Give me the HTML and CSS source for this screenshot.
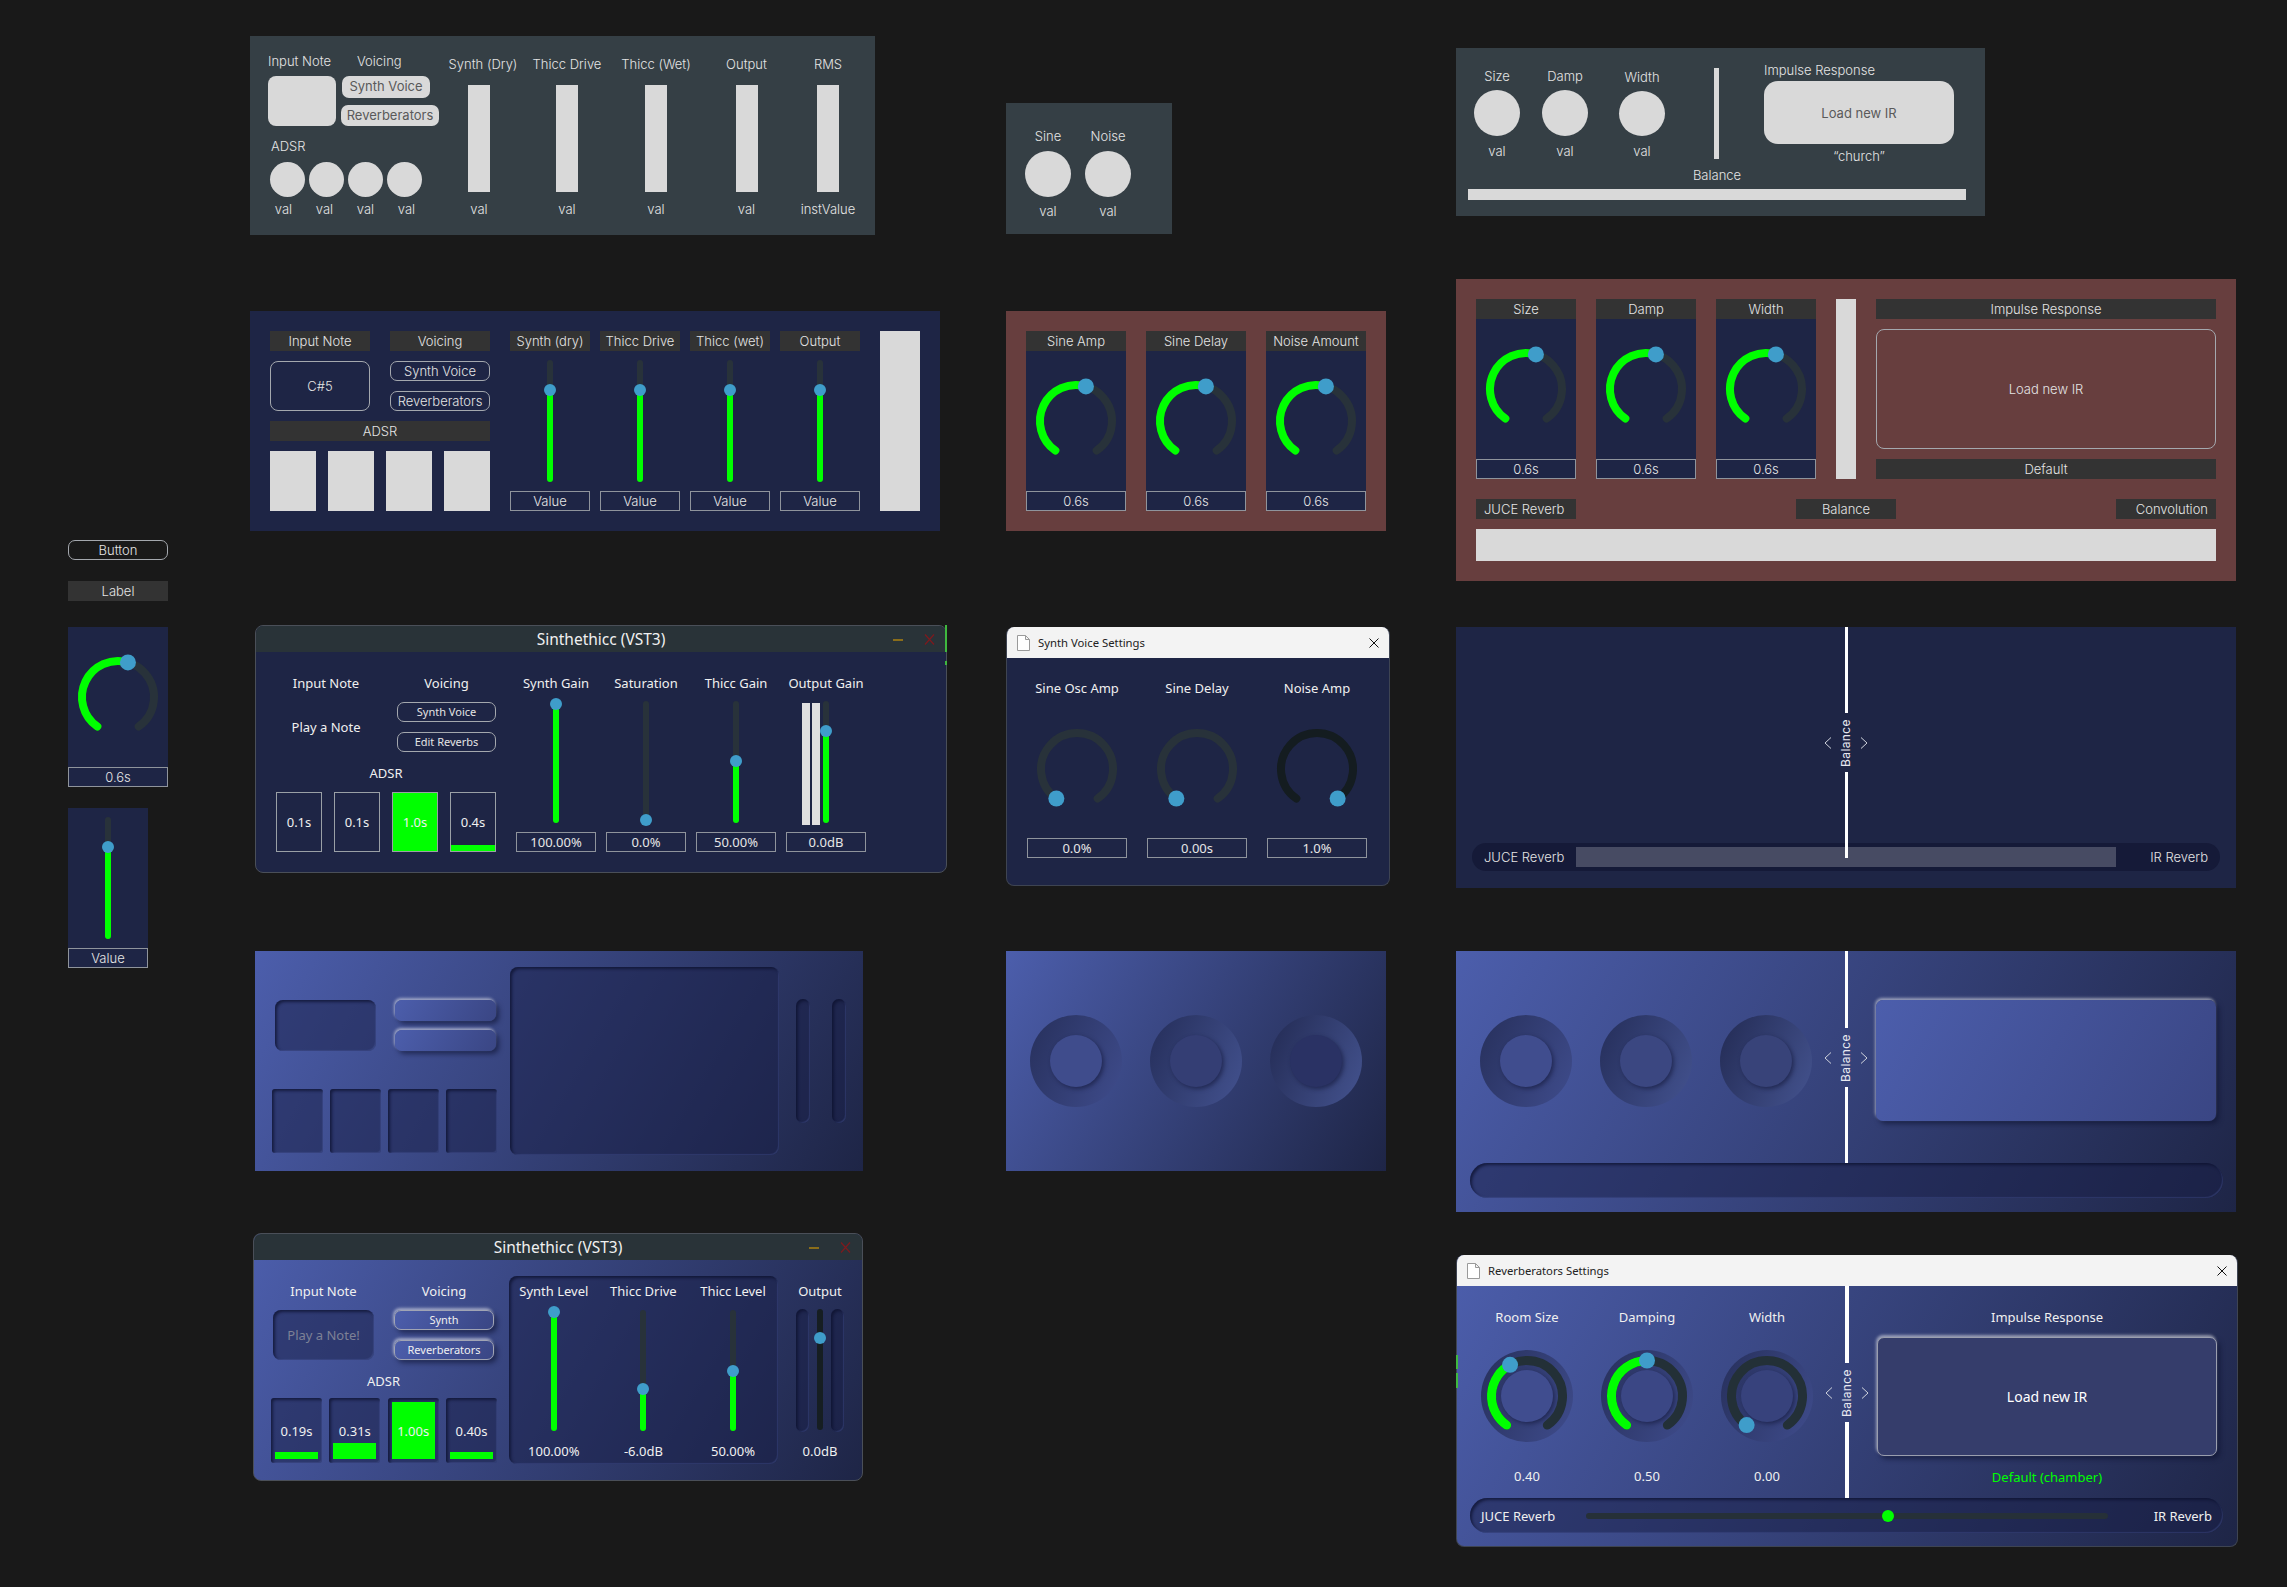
FILE: index.html
```html
<!DOCTYPE html>
<html>
<head>
  <title>Sinthethicc UI Board</title>
  <meta charset="UTF-8">
  <meta name="viewport" content="width=device-width, initial-scale=1.0">
  <link rel="stylesheet" href="styles.css">
</head>
<body>
  <!-- shared knob drawings -->
  <svg class="defs" aria-hidden="true">
    <symbol id="knob-mid" viewBox="-8 -8 96 96">
      <path class="arc-track" d="M19.35 69.49A36 36 0 1 1 60.65 69.49"/>
      <path class="arc-value" d="M19.35 69.49A36 36 0 0 1 49.92 5.39"/>
      <circle class="arc-thumb" cx="49.92" cy="5.39" r="8"/>
    </symbol>
    <symbol id="knob-min" viewBox="-8 -8 96 96">
      <path class="arc-track" d="M19.35 69.49A36 36 0 1 1 60.65 69.49"/>
      <circle class="arc-thumb" cx="19.35" cy="69.49" r="8"/>
    </symbol>
    <symbol id="knob-max" viewBox="-8 -8 96 96">
      <path class="arc-track dark" d="M19.35 69.49A36 36 0 1 1 60.65 69.49"/>
      <circle class="arc-thumb" cx="60.65" cy="69.49" r="8"/>
    </symbol>
    <symbol id="rev-room" viewBox="0 0 92 92">
      <path class="arc-track thick" d="M25.64 75.08A35.5 35.5 0 1 1 66.36 75.08"/>
      <path class="arc-value thick" d="M25.64 75.08A35.5 35.5 0 0 1 29.06 14.8"/>
      <circle class="arc-thumb" cx="29.06" cy="14.8" r="8"/>
    </symbol>
    <symbol id="rev-damp" viewBox="0 0 92 92">
      <path class="arc-track thick" d="M25.64 75.08A35.5 35.5 0 1 1 66.36 75.08"/>
      <path class="arc-value thick" d="M25.64 75.08A35.5 35.5 0 0 1 46 10.5"/>
      <circle class="arc-thumb" cx="46" cy="10.5" r="8"/>
    </symbol>
    <symbol id="rev-width" viewBox="0 0 92 92">
      <path class="arc-track thick" d="M25.64 75.08A35.5 35.5 0 1 1 66.36 75.08"/>
      <circle class="arc-thumb" cx="25.64" cy="75.08" r="8"/>
    </symbol>
    <symbol id="chev-left" viewBox="0 0 8 12"><path class="chev" d="M7 .5 1 6l6 5.5"/></symbol>
    <symbol id="chev-right" viewBox="0 0 8 12"><path class="chev" d="M1 .5 7 6l-6 5.5"/></symbol>
    <symbol id="doc" viewBox="0 0 13 16"><path class="doc" d="M.5.5h8l4 4v11H.5zM8.5.5v4h4"/></symbol>
  </svg>

  <main class="board">

    <!-- left column: single components -->
    <div class="panel at-button btn">Button</div>
    <div class="panel at-label tag">Label</div>
    <div class="panel at-knobcard knob-card">
      <div class="knob-body"><svg class="knob"><use href="#knob-mid"/></svg></div>
      <div class="val">0.6s</div>
    </div>
    <div class="panel at-slidercard">
      <div class="slider-body"><div class="fader" style="--v:75.4%"><i></i><b></b></div></div>
      <div class="val">Value</div>
    </div>

    <!-- wireframe, main -->
    <section class="panel at-wire-main slate wire-main">
      <div class="wire-left">
        <div class="wire-heads"><span class="wire-note-head">Input Note</span><span>Voicing</span></div>
        <div class="wire-row">
          <div class="wire-note"></div>
          <div class="wire-btns">
            <div class="wire-btn wide-a">Synth Voice</div>
            <div class="wire-btn wide-b">Reverberators</div>
          </div>
        </div>
        <div class="wire-adsr">ADSR</div>
        <div class="wire-dots"><i></i><i></i><i></i><i></i></div>
        <div class="wire-vals"><span>val</span><span>val</span><span>val</span><span>val</span></div>
      </div>
      <div class="wire-col c1"><span class="nudge">Synth (Dry)</span><div class="wire-bar"></div><span>val</span></div>
      <div class="wire-col c2"><span>Thicc Drive</span><div class="wire-bar"></div><span>val</span></div>
      <div class="wire-col c3"><span>Thicc (Wet)</span><div class="wire-bar"></div><span>val</span></div>
      <div class="wire-col c4"><span>Output</span><div class="wire-bar"></div><span>val</span></div>
      <div class="wire-col c5"><span>RMS</span><div class="wire-bar"></div><span>instValue</span></div>
    </section>

    <section class="panel at-wire-sine slate wire-sine">
      <div class="sine-col"><span>Sine</span><i></i><span>val</span></div>
      <div class="sine-col"><span>Noise</span><i></i><span>val</span></div>
    </section>

    <section class="panel at-wire-rev slate wire-rev">
      <div class="wr-top">
        <div class="wr-knobs">
          <div class="sine-col"><span>Size</span><i></i><span>val</span></div>
          <div class="sine-col"><span>Damp</span><i></i><span>val</span></div>
          <div class="sine-col low"><span>Width</span><i></i><span>val</span></div>
        </div>
        <div class="wr-divider"></div>
        <div class="wr-impulse">
          <span>Impulse Response</span>
          <div class="wr-load">Load new IR</div>
          <span class="wr-name">“church”</span>
        </div>
      </div>
      <div class="wr-balance">Balance</div>
      <div class="wr-bar"></div>
    </section>

    <!-- labelled blocks -->
    <section class="panel at-block-main navy block-main">
      <div class="block-left">
        <div class="tag">Input Note</div>
        <div class="tag">Voicing</div>
        <div class="note-box">C#5</div>
        <div class="btn-stack">
          <div class="btn">Synth Voice</div>
          <div class="btn">Reverberators</div>
        </div>
        <div class="tag span2">ADSR</div>
        <div class="block-env span2"><i></i><i></i><i></i><i></i></div>
      </div>
      <div class="block-faders">
        <div class="fader-col"><div class="tag">Synth (dry)</div><div class="fader" style="--v:75.4%"><i></i><b></b></div><div class="val">Value</div></div>
        <div class="fader-col"><div class="tag">Thicc Drive</div><div class="fader" style="--v:75.4%"><i></i><b></b></div><div class="val">Value</div></div>
        <div class="fader-col"><div class="tag">Thicc (wet)</div><div class="fader" style="--v:75.4%"><i></i><b></b></div><div class="val">Value</div></div>
        <div class="fader-col"><div class="tag">Output</div><div class="fader" style="--v:75.4%"><i></i><b></b></div><div class="val">Value</div></div>
      </div>
      <div class="block-meter"></div>
    </section>

    <section class="panel at-block-sine red block-sine">
      <div class="knob-card"><div class="tag">Sine Amp</div><div class="knob-body"><svg class="knob"><use href="#knob-mid"/></svg></div><div class="val">0.6s</div></div>
      <div class="knob-card"><div class="tag">Sine Delay</div><div class="knob-body"><svg class="knob"><use href="#knob-mid"/></svg></div><div class="val">0.6s</div></div>
      <div class="knob-card"><div class="tag">Noise Amount</div><div class="knob-body"><svg class="knob"><use href="#knob-mid"/></svg></div><div class="val">0.6s</div></div>
    </section>

    <section class="panel at-block-rev red block-rev">
      <div class="brev-top">
        <div class="knob-card"><div class="tag">Size</div><div class="knob-body"><svg class="knob"><use href="#knob-mid"/></svg></div><div class="val">0.6s</div></div>
        <div class="knob-card"><div class="tag">Damp</div><div class="knob-body"><svg class="knob"><use href="#knob-mid"/></svg></div><div class="val">0.6s</div></div>
        <div class="knob-card"><div class="tag">Width</div><div class="knob-body"><svg class="knob"><use href="#knob-mid"/></svg></div><div class="val">0.6s</div></div>
        <div class="brev-divider"></div>
        <div class="brev-impulse">
          <div class="tag">Impulse Response</div>
          <div class="brev-load">Load new IR</div>
          <div class="tag">Default</div>
        </div>
      </div>
      <div class="brev-labels">
        <div class="tag start">JUCE Reverb</div>
        <div class="tag">Balance</div>
        <div class="tag end">Convolution</div>
      </div>
      <div class="brev-bar"></div>
    </section>

    <!-- plugin window, flat -->
    <section class="panel at-win-flat win navy">
      <header class="win-title">
        <span>Sinthethicc (VST3)</span>
        <i class="win-min"></i>
        <svg class="win-x" viewBox="0 0 11 11"><path d="M1 .5l9 10M10 .5l-9 10"/></svg>
      </header>
      <div class="win-body flat-body">
        <div class="win-left">
          <div class="win-head">Input Note</div>
          <div class="win-head">Voicing</div>
          <div class="win-note">Play a Note</div>
          <div class="btn-stack">
            <div class="btn small">Synth Voice</div>
            <div class="btn small">Edit Reverbs</div>
          </div>
          <div class="win-head span2">ADSR</div>
          <div class="env-row span2">
            <div class="env"><span>0.1s</span></div>
            <div class="env"><span>0.1s</span></div>
            <div class="env"><i style="height:100%"></i><span>1.0s</span></div>
            <div class="env"><i style="height:11%"></i><span>0.4s</span></div>
          </div>
        </div>
        <div class="win-faders">
          <div class="fader-col win-col"><div class="win-head">Synth Gain</div><div class="fader" style="--v:97.5%"><i></i><b></b></div><div class="val win-val">100.00%</div></div>
          <div class="fader-col win-col"><div class="win-head">Saturation</div><div class="fader" style="--v:2.5%"><i></i><b></b></div><div class="val win-val">0.0%</div></div>
          <div class="fader-col win-col"><div class="win-head">Thicc Gain</div><div class="fader" style="--v:50.8%"><i></i><b></b></div><div class="val win-val">50.00%</div></div>
          <div class="fader-col win-col"><div class="win-head">Output Gain</div><div class="fader" style="--v:75.4%"><div class="meter"><u></u><u></u></div><i></i><b></b></div><div class="val win-val">0.0dB</div></div>
        </div>
      </div>
    </section>
    <i class="panel edge-mark em-flat-a"></i>
    <i class="panel edge-mark em-flat-b"></i>

    <!-- synth voice settings window -->
    <section class="panel at-win-voice syswin navy">
      <header class="sys-title">
        <svg class="sys-doc"><use href="#doc"/></svg>
        <span>Synth Voice Settings</span>
        <svg class="sys-x" viewBox="0 0 10 10"><path d="M.5.5l9 9M9.5.5l-9 9"/></svg>
      </header>
      <div class="voice-body">
        <div class="voice-col"><div class="win-head">Sine Osc Amp</div><svg class="knob"><use href="#knob-min"/></svg><div class="val">0.0%</div></div>
        <div class="voice-col"><div class="win-head">Sine Delay</div><svg class="knob"><use href="#knob-min"/></svg><div class="val">0.00s</div></div>
        <div class="voice-col"><div class="win-head">Noise Amp</div><svg class="knob"><use href="#knob-max"/></svg><div class="val">1.0%</div></div>
      </div>
    </section>

    <!-- balance overlay on navy -->
    <section class="panel at-split navy split-panel">
      <div class="split"><i class="line h86"></i><div class="split-mid m59"><svg class="chev-icon"><use href="#chev-left"/></svg><span class="v-text">Balance</span><svg class="chev-icon"><use href="#chev-right"/></svg></div><i class="line h86"></i></div>
      <div class="split-pill">
        <span class="pill-start">JUCE Reverb</span>
        <div class="split-track"></div>
        <span class="pill-end">IR Reverb</span>
      </div>
    </section>

    <!-- soft gradient panels -->
    <section class="panel at-soft-main grad soft-main">
      <div class="soft-left">
        <div class="soft-row">
          <div class="inset soft-note"></div>
          <div class="soft-btns"><div class="raised"></div><div class="raised"></div></div>
        </div>
        <div class="soft-env"><div class="inset"></div><div class="inset"></div><div class="inset"></div><div class="inset"></div></div>
      </div>
      <div class="inset soft-big"></div>
      <div class="inset soft-slot"></div>
      <div class="inset soft-slot"></div>
    </section>

    <section class="panel at-soft-sine grad soft-sine">
      <div class="well"><div class="hole h1"></div></div>
      <div class="well w2"><div class="hole h2"></div></div>
      <div class="well w3"><div class="hole h3"></div></div>
    </section>

    <section class="panel at-soft-rev grad soft-rev">
      <div class="split"><i class="line h77"></i><div class="split-mid m59"><svg class="chev-icon"><use href="#chev-left"/></svg><span class="v-text">Balance</span><svg class="chev-icon"><use href="#chev-right"/></svg></div><i class="line h76"></i></div>
      <div class="srev-row">
        <div class="well"><div class="hole h1"></div></div>
        <div class="well w2"><div class="hole h2"></div></div>
        <div class="well w3"><div class="hole h3"></div></div>
        <div class="raised srev-box"></div>
      </div>
      <div class="inset srev-pill"></div>
    </section>

    <!-- plugin window, soft -->
    <section class="panel at-win-soft win grad">
      <header class="win-title">
        <span>Sinthethicc (VST3)</span>
        <i class="win-min"></i>
        <svg class="win-x" viewBox="0 0 11 11"><path d="M1 .5l9 10M10 .5l-9 10"/></svg>
      </header>
      <div class="win-body soft-body">
        <div class="win-left sw-left">
          <div class="win-head">Input Note</div>
          <div class="win-head">Voicing</div>
          <div class="inset sw-note">Play a Note!</div>
          <div class="btn-stack">
            <div class="raised labeled">Synth</div>
            <div class="raised labeled">Reverberators</div>
          </div>
          <div class="win-head span2">ADSR</div>
          <div class="env-row sw-env span2">
            <div class="inset env-soft"><i style="height:11%"></i><span>0.19s</span></div>
            <div class="inset env-soft"><i style="height:24%"></i><span>0.31s</span></div>
            <div class="inset env-soft"><i style="height:100%"></i><span>1.00s</span></div>
            <div class="inset env-soft"><i style="height:11%"></i><span>0.40s</span></div>
          </div>
        </div>
        <div class="inset sw-faders">
          <div class="sw-col"><div class="win-head">Synth Level</div><div class="fader short" style="--v:98%"><i></i><b></b></div><div class="win-head">100.00%</div></div>
          <div class="sw-col"><div class="win-head">Thicc Drive</div><div class="fader short" style="--v:34.7%"><i></i><b></b></div><div class="win-head">-6.0dB</div></div>
          <div class="sw-col"><div class="win-head">Thicc Level</div><div class="fader short" style="--v:50%"><i></i><b></b></div><div class="win-head">50.00%</div></div>
        </div>
        <div class="sw-output">
          <div class="win-head">Output</div>
          <div class="sw-meter">
            <div class="inset sw-slot"></div>
            <div class="fader short blank" style="--v:76%"><b></b></div>
            <div class="inset sw-slot"></div>
          </div>
          <div class="win-head">0.0dB</div>
        </div>
      </div>
    </section>

    <!-- reverberators settings window -->
    <section class="panel at-win-rev syswin grad">
      <header class="sys-title rev-title">
        <svg class="sys-doc"><use href="#doc"/></svg>
        <span>Reverberators Settings</span>
        <svg class="sys-x" viewBox="0 0 10 10"><path d="M.5.5l9 9M9.5.5l-9 9"/></svg>
      </header>
      <div class="rev-body">
        <div class="split thick-split"><i class="line h77"></i><div class="split-mid m59"><svg class="chev-icon"><use href="#chev-left"/></svg><span class="v-text">Balance</span><svg class="chev-icon"><use href="#chev-right"/></svg></div><i class="line h76"></i></div>
        <div class="rev-row">
          <div class="rev-col">
            <div class="win-head">Room Size</div>
            <div class="well rev-well"><div class="hole h4"></div><svg class="rev-knob"><use href="#rev-room"/></svg></div>
            <div class="win-head">0.40</div>
          </div>
          <div class="rev-col">
            <div class="win-head">Damping</div>
            <div class="well rev-well"><div class="hole h5"></div><svg class="rev-knob"><use href="#rev-damp"/></svg></div>
            <div class="win-head">0.50</div>
          </div>
          <div class="rev-col">
            <div class="win-head">Width</div>
            <div class="well rev-well"><div class="hole h6"></div><svg class="rev-knob"><use href="#rev-width"/></svg></div>
            <div class="win-head">0.00</div>
          </div>
          <div class="rev-impulse">
            <div class="win-head">Impulse Response</div>
            <div class="raised rev-load">Load new IR</div>
            <div class="win-head green">Default (chamber)</div>
          </div>
        </div>
        <div class="inset rev-pill">
          <span class="rev-pill-start">JUCE Reverb</span>
          <div class="rev-track"><i></i></div>
          <span class="pill-end">IR Reverb</span>
        </div>
      </div>
    </section>
    <i class="panel edge-mark em-rev-a"></i>
    <i class="panel edge-mark em-rev-b"></i>

  </main>
</body>
</html>
```
FILE: styles.css
```css
* {
  box-sizing: border-box;
}

body {
  margin: 0;
  background-color: #191919;
  font-family: 'Inter', 'Liberation Sans', sans-serif;
  font-size: 13px;
  font-weight: 300;
  line-height: 16px;
  color: #e4e4e4;
}

.defs {
  position: absolute;
  width: 0;
  height: 0;
}

.board {
  position: relative;
  width: 2287px;
  height: 1587px;
  overflow: hidden;
}

/* places on the board */
.panel { position: absolute; }
.at-button { left: 68px; top: 540px; width: 100px; height: 20px; }
.at-label { left: 68px; top: 581px; width: 100px; height: 20px; }
.at-knobcard { left: 68px; top: 627px; width: 100px; }
.at-slidercard { left: 68px; top: 808px; width: 80px; }
.at-wire-main { left: 250px; top: 36px; width: 625px; height: 199px; }
.at-wire-sine { left: 1006px; top: 103px; width: 166px; height: 131px; }
.at-wire-rev { left: 1456px; top: 48px; width: 529px; height: 168px; }
.at-block-main { left: 250px; top: 311px; width: 690px; height: 220px; }
.at-block-sine { left: 1006px; top: 311px; width: 380px; height: 220px; }
.at-block-rev { left: 1456px; top: 279px; width: 780px; height: 302px; }
.at-win-flat { left: 255px; top: 625px; width: 692px; height: 248px; }
.at-win-voice { left: 1006px; top: 627px; width: 384px; height: 259px; }
.at-split { left: 1456px; top: 627px; width: 780px; height: 261px; }
.at-soft-main { left: 255px; top: 951px; width: 608px; height: 220px; }
.at-soft-sine { left: 1006px; top: 951px; width: 380px; height: 220px; }
.at-soft-rev { left: 1456px; top: 951px; width: 780px; height: 261px; }
.at-win-soft { left: 253px; top: 1233px; width: 610px; height: 248px; }
.at-win-rev { left: 1456px; top: 1255px; width: 782px; height: 292px; }

/* stray green edge pixels from the captured windows */
.edge-mark { width: 2px; background-color: #3fb83f; }
.em-flat-a { left: 945px; top: 625px; height: 27px; }
.em-flat-b { left: 945px; top: 661px; height: 4px; }
.em-rev-a { left: 1456px; top: 1355px; height: 14px; }
.em-rev-b { left: 1456px; top: 1373px; height: 15px; }

/* surfaces */
.slate { background-color: #353f45; }
.navy { background-color: #1e2545; }
.red { background-color: #673e3e; }
.grad { background: linear-gradient(120deg, #4c5eac, #1e2546); }

/* small parts */
.tag {
  display: flex;
  align-items: center;
  justify-content: center;
  height: 20px;
  background-color: #333;
}
.tag.start { justify-content: flex-start; padding-left: 8px; }
.tag.end { justify-content: flex-end; padding-right: 8px; }

.val {
  display: flex;
  align-items: center;
  justify-content: center;
  height: 20px;
  background-color: #1e2545;
  border: 1px solid #8f949c;
  color: #e6e6e6;
}

.btn {
  display: flex;
  align-items: center;
  justify-content: center;
  height: 20px;
  border: 1px solid #a4a8ae;
  border-radius: 7px;
}
.btn.small { font-family: 'Noto Sans', sans-serif; font-size: 11px; font-weight: 400; }

.btn-stack {
  display: flex;
  flex-direction: column;
  gap: 10px;
}

.span2 { grid-column: span 2; }

/* knobs */
.knob {
  display: block;
  width: 96px;
  height: 96px;
}
.arc-track, .arc-value {
  fill: none;
  stroke-width: 8;
  stroke-linecap: round;
}
.arc-track { stroke: #28323a; }
.arc-track.dark { stroke: #141c20; }
.arc-value { stroke: #00ff00; }
.arc-track.thick, .arc-value.thick { stroke-width: 9; }
.arc-track.thick { stroke: #233037; }
.arc-thumb { fill: #3f9dca; }
.chev { fill: none; stroke: #d0d3dc; stroke-width: 1; }
.doc { fill: #fff; stroke: #9a9a9a; stroke-width: 1; }

.knob-card { width: 100px; }
.knob-body {
  display: flex;
  align-items: center;
  justify-content: center;
  height: 140px;
  background-color: #1e2545;
}

/* faders */
.fader {
  position: relative;
  width: 6px;
  height: 122px;
  background-color: #28323a;
  border-radius: 3px;
}
.fader.short { height: 121px; }
.fader.blank { background-color: #161e22; }
.fader i {
  position: absolute;
  left: 0;
  bottom: 0;
  width: 6px;
  height: var(--v);
  background-color: #00ff00;
  border-radius: 3px;
}
.fader b {
  position: absolute;
  left: -3px;
  bottom: calc(var(--v) - 6px);
  width: 12px;
  height: 12px;
  background-color: #3f9dca;
  border-radius: 50%;
}
.slider-body {
  display: flex;
  justify-content: center;
  align-items: center;
  height: 140px;
  background-color: #1e2545;
}
.fader-col {
  display: flex;
  flex-direction: column;
  align-items: center;
  width: 80px;
}
.fader-col .tag, .fader-col .val { width: 100%; }
.fader-col .fader { margin: 9px 0; }

/* wireframe main */
.wire-main { display: flex; }
.wire-left { width: 185px; margin-left: 18px; padding-top: 17px; }
.wire-heads { display: flex; }
.wire-note-head { width: 89px; }
.wire-row { display: flex; margin-top: 7px; }
.wire-note {
  width: 68px;
  height: 50px;
  background-color: #d9d9d9;
  border-radius: 8px;
}
.wire-btns { display: flex; flex-direction: column; gap: 7px; margin-left: 6px; }
.wire-btn {
  height: 22px;
  padding-top: 2px;
  text-align: center;
  background-color: #d9d9d9;
  border-radius: 7px;
  font-weight: 400;
  color: #5a5a5a;
}
.wide-a { width: 88px; }
.wide-b { width: 98px; height: 21px; margin-left: -1px; }
.wire-adsr { margin: 12px 0 0 3px; }
.wire-dots { display: flex; gap: 4px; margin: 8px 0 0 2px; }
.wire-dots i {
  width: 35px;
  height: 35px;
  background-color: #d9d9d9;
  border-radius: 50%;
}
.wire-vals { display: flex; margin: 4px 0 0 -5px; }
.wire-vals span { width: 41px; text-align: center; }
.wire-col {
  display: flex;
  flex-direction: column;
  align-items: center;
  padding-top: 20px;
}
.wire-col.c1 { width: 88px; margin-left: -18px; }
.wire-col.c2 { width: 88px; }
.wire-col.c3 { width: 90px; }
.wire-col.c4 { width: 91px; }
.wire-col.c5 { width: 72px; }
.nudge { transform: translateX(4px); }
.wire-bar {
  width: 22px;
  height: 107px;
  margin: 13px 0 9px;
  background-color: #d9d9d9;
}

.wire-sine { display: flex; gap: 14px; padding: 25px 0 0 19px; }
.sine-col {
  display: flex;
  flex-direction: column;
  align-items: center;
  width: 46px;
}
.sine-col i {
  width: 46px;
  height: 46px;
  margin: 7px 0 6px;
  background-color: #d9d9d9;
  border-radius: 50%;
}

/* wireframe reverb */
.wire-rev { padding: 20px 19px 0 12px; }
.wr-top { display: flex; height: 91px; }
.wr-knobs { display: flex; gap: 22px; margin: 0 0 0 6px; padding-top: 0; }
.wr-knobs .sine-col i { margin: 6px 0 7px; }
.wr-knobs .low { margin-left: 9px; margin-top: 1px; }
.wr-divider {
  width: 5px;
  height: 91px;
  margin-left: 49px;
  background-color: #d9d9d9;
}
.wr-impulse {
  display: flex;
  flex-direction: column;
  height: 110px;
  margin: -6px 0 0 45px;
}
.wr-load {
  flex: none;
  display: flex;
  align-items: center;
  justify-content: center;
  width: 190px;
  height: 63px;
  margin-top: 3px;
  background-color: #d9d9d9;
  border-radius: 14px;
  font-weight: 400;
  color: #5a5a5a;
}
.wr-name { margin-top: 4px; text-align: center; }
.wr-balance { margin-top: 8px; text-align: center; }
.wr-bar { height: 11px; margin-top: 6px; background-color: #d9d9d9; }

/* block main */
.block-main { display: flex; gap: 20px; padding: 20px; }
.block-left {
  display: grid;
  grid-template-columns: 100px 100px;
  column-gap: 20px;
  row-gap: 10px;
  grid-template-rows: 20px 50px 20px 60px;
  width: 220px;
}
.note-box {
  display: flex;
  align-items: center;
  justify-content: center;
  border: 1px solid #a4a8ae;
  border-radius: 8px;
}
.block-env { display: flex; justify-content: space-between; }
.block-env i { width: 46px; height: 60px; background-color: #d9d9d9; }
.block-faders { display: flex; gap: 10px; }
.block-meter { width: 40px; height: 180px; background-color: #d9d9d9; }

.block-sine { display: flex; gap: 20px; padding: 20px; }

/* block reverb */
.block-rev { padding: 20px; }
.brev-top { display: flex; gap: 20px; }
.brev-divider { width: 20px; background-color: #d9d9d9; }
.brev-impulse { flex: 1; display: flex; flex-direction: column; gap: 10px; }
.brev-load {
  flex: 1;
  display: flex;
  align-items: center;
  justify-content: center;
  border: 1px solid #a4a8ae;
  border-radius: 8px;
}
.brev-labels {
  display: flex;
  justify-content: space-between;
  margin-top: 20px;
}
.brev-labels .tag { width: 100px; }
.brev-bar { height: 32px; margin-top: 10px; background-color: #d9d9d9; }

/* plugin windows */
.win {
  display: flex;
  flex-direction: column;
  border: 1px solid #4a4f58;
  border-radius: 8px;
  overflow: hidden;
  font-family: 'Noto Sans', sans-serif;
  font-size: 13px;
  font-weight: 400;
}
.win-title {
  position: relative;
  flex: none;
  display: flex;
  align-items: center;
  justify-content: center;
  height: 26px;
  background-color: #293338;
  font-size: 15.5px;
  color: #f0f0f0;
}
.win-min {
  position: absolute;
  right: 43px;
  top: 13px;
  width: 10px;
  height: 2px;
  background-color: #8a6d1a;
}
.win-x {
  position: absolute;
  right: 11px;
  top: 8px;
  width: 11px;
  height: 11px;
  fill: none;
  stroke: #7d1a1e;
  stroke-width: 1.2;
}
.win-body { flex: 1; display: flex; }
.win-head {
  font-family: 'Noto Sans', sans-serif;
  font-size: 13px;
  font-weight: 400;
  line-height: 16px;
  text-align: center;
  color: #f0f0f0;
}
.flat-body { padding: 23px 0 0 20px; }
.win-left {
  display: grid;
  grid-template-columns: 100px 99px;
  column-gap: 21px;
  grid-template-rows: 16px 50px 16px 60px;
  row-gap: 11px;
  width: 220px;
  align-content: start;
}
.win-note {
  display: flex;
  align-items: center;
  justify-content: center;
  color: #f0f0f0;
}
.win-left .win-head.span2 { margin-top: 2px; }
.env-row { display: flex; justify-content: space-between; margin-top: 2px; }
.env {
  position: relative;
  display: flex;
  align-items: center;
  justify-content: center;
  width: 46px;
  height: 60px;
  border: 1px solid #9aa0a6;
  color: #f0f0f0;
}
.env i, .env-soft i {
  position: absolute;
  left: 0;
  bottom: 0;
  width: 100%;
  background-color: #00ff00;
}
.env span, .env-soft span { position: relative; }

.win-faders { display: flex; gap: 10px; margin-left: 20px; }
.win-col .win-head { height: 16px; white-space: nowrap; }
.win-col .fader { margin: 10px 0 9px; }
.win-val { font-family: 'Noto Sans', sans-serif; font-weight: 400; }
.meter {
  position: absolute;
  left: -21px;
  top: 2px;
  display: flex;
  gap: 2px;
  height: 122px;
}
.meter u { width: 8px; background-color: #e0e0e0; }

/* system windows */
.syswin {
  display: flex;
  flex-direction: column;
  border: 1px solid #3e4452;
  border-top: 0;
  border-radius: 8px;
  overflow: hidden;
}
.sys-title {
  flex: none;
  display: flex;
  align-items: center;
  height: 31px;
  padding: 0 10px;
  background-color: #f3f3f3;
  font-family: 'Noto Sans', sans-serif;
  font-size: 11.3px;
  font-weight: 400;
  color: #222;
}
.sys-doc { width: 13px; height: 16px; flex: none; margin-right: 8px; }
.sys-x {
  width: 10px;
  height: 10px;
  margin-left: auto;
  fill: none;
  stroke: #111;
  stroke-width: 1;
}
.voice-body { display: flex; gap: 20px; padding: 22px 0 0 20px; }
.voice-col {
  display: flex;
  flex-direction: column;
  align-items: center;
  width: 100px;
}
.voice-col .val { width: 100%; margin-top: 21px; font-family: 'Noto Sans', sans-serif; font-weight: 400; }
.voice-col .knob { margin-top: 25px; }

/* balance split */
.split {
  position: absolute;
  left: 360px;
  top: 0;
  width: 60px;
  display: flex;
  flex-direction: column;
  align-items: center;
  z-index: 1;
}
.line { display: block; width: 3px; background-color: #fff; }
.h86 { height: 86px; }
.h77 { height: 77px; }
.h76 { height: 76px; }
.split-mid {
  display: flex;
  align-items: center;
  justify-content: center;
  gap: 8px;
}
.m59 { height: 59px; }
.v-text {
  writing-mode: vertical-rl;
  transform: rotate(180deg);
  font-size: 12px;
  font-weight: 400;
  line-height: 12px;
  letter-spacing: .4px;
  color: #e8e8f0;
}
.chev-icon { width: 8px; height: 12px; }

.split-panel { display: flex; flex-direction: column; justify-content: flex-end; padding: 0 16px 17px; }
.split-pill {
  display: flex;
  align-items: center;
  height: 28px;
  padding: 0 12px;
  background-color: #151a38;
  border-radius: 14px;
}
.pill-start { width: 92px; flex: none; }
.pill-end { flex: 1; text-align: right; }
.split-track { width: 540px; height: 20px; background-color: #474b63; }

/* soft surfaces */
.inset {
  background-color: rgba(24, 30, 70, .5);
  box-shadow: inset 2px 2px 3px rgba(12, 16, 44, .7), inset -1px -1px 1px rgba(90, 105, 180, .3);
  border-radius: 8px;
}
.raised {
  background: linear-gradient(120deg, #4c5eac, #3a4684);
  border-radius: 7px;
  box-shadow: -1px -2px 3px rgba(255, 255, 255, .5), 3px 3px 5px rgba(14, 18, 48, .6);
}

.soft-main { display: flex; align-items: flex-start; }
.soft-left { width: 225px; margin-left: 17px; padding-top: 49px; }
.soft-row { display: flex; }
.soft-note { width: 101px; height: 51px; margin-left: 3px; }
.soft-btns { display: flex; flex-direction: column; gap: 9px; width: 101px; margin-left: 19px; }
.soft-btns .raised { height: 21px; }
.soft-env { display: flex; gap: 7px; margin-top: 38px; }
.soft-env .inset { width: 51px; height: 64px; border-radius: 3px; }
.soft-big { width: 269px; height: 188px; margin: 16px 0 0 13px; }
.soft-slot { width: 14px; height: 124px; margin: 48px 0 0 17px; border-radius: 7px; }
.soft-slot:last-child { margin-left: 22px; }

.soft-sine { display: flex; gap: 28px; padding: 64px 0 0 24px; }
.well {
  position: relative;
  flex: none;
  display: flex;
  align-items: center;
  justify-content: center;
  width: 92px;
  height: 92px;
  background: linear-gradient(115deg, #27305c, #3f4c8c);
  border-radius: 50%;
}
.well.w2 { background: linear-gradient(115deg, #252e5a, #43528f); }
.well.w3 { background: linear-gradient(115deg, #232b54, #44538f); }
.hole {
  width: 52px;
  height: 52px;
  border-radius: 50%;
  box-shadow: 2px 2px 4px rgba(16, 20, 52, .55);
}
.h1 { background-color: #3f4c8c; }
.h2 { background-color: #343e74; }
.h3 { background-color: #2a3264; }
.h4 { background-color: #404d8f; }
.h5 { background-color: #3b4785; }
.h6 { background-color: #37427c; }
.soft-rev .h1 { background-color: #404d8e; }
.soft-rev .h2 { background-color: #3b4781; }
.soft-rev .h3 { background-color: #384379; }

.soft-rev { display: flex; flex-direction: column; padding: 49px 13px 0 14px; }
.srev-row { display: flex; align-items: center; gap: 28px; padding-left: 10px; height: 121px; }
.srev-box { width: 340px; height: 121px; margin-left: 36px; }
.srev-pill { height: 35px; margin-top: 42px; border-radius: 18px; }

/* soft plugin window */
.soft-body { position: relative; padding-left: 19px; }
.sw-left { padding-top: 23px; grid-template-columns: 101px 100px; column-gap: 20px; width: 221px; row-gap: 11px; grid-template-rows: 16px 50px 16px 65px; }
.sw-note {
  display: flex;
  align-items: center;
  justify-content: center;
  color: #7d8196;
}
.labeled {
  display: flex;
  align-items: center;
  justify-content: center;
  height: 20px;
  border: 1px solid #a0a4b4;
  font-size: 11px;
  font-family: 'Noto Sans', sans-serif;
  color: #f0f0f0;
}
.sw-env { margin: 0 -3px 0 -2px; }
.env-soft {
  position: relative;
  display: flex;
  align-items: center;
  justify-content: center;
  width: 51px;
  height: 65px;
  padding: 4px;
  border-radius: 3px;
  color: #f0f0f0;
}
.env-soft i {
  left: 4px;
  bottom: 4px;
  width: 43px;
  max-height: calc(100% - 8px);
}
.sw-faders {
  display: flex;
  width: 269px;
  height: 188px;
  margin: 16px 0 0 15px;
  padding-top: 7px;
}
.sw-col {
  display: flex;
  flex-direction: column;
  align-items: center;
  width: 89.6px;
}
.sw-col .fader { margin: 11px 0 12px; }
.sw-output {
  display: flex;
  flex-direction: column;
  align-items: center;
  width: 84px;
  padding-top: 23px;
}
.sw-meter { display: flex; gap: 8px; margin: 10px 0 11px; }
.sw-slot { width: 13px; height: 123px; border-radius: 7px; }

/* reverberators window */
.rev-body { position: relative; flex: 1; }
.rev-title { padding-left: 10px; }
.thick-split .line { width: 4px; }
.rev-row { display: flex; padding: 23px 0 0 10px; }
.rev-col {
  display: flex;
  flex-direction: column;
  align-items: center;
  width: 120px;
}
.rev-well { margin: 25px 0 26px; }
.rev-knob { position: absolute; left: 0; top: 0; width: 92px; height: 92px; }
.rev-impulse {
  display: flex;
  flex-direction: column;
  width: 340px;
  margin-left: 50px;
}
.rev-load {
  display: flex;
  align-items: center;
  justify-content: center;
  height: 119px;
  margin: 12px 0 13px;
  background: #353d6b;
  border: 1px solid #9a9eae;
  font-family: 'Noto Sans', sans-serif;
  font-size: 14px;
  font-weight: 400;
  color: #fff;
}
.green { color: #00ff00; }
.rev-pill {
  display: flex;
  align-items: center;
  height: 35px;
  margin: 13px 14px 0 13px;
  padding: 0 11px;
  border-radius: 18px;
  font-family: 'Noto Sans', sans-serif;
  font-weight: 400;
  color: #f0f0f0;
}
.rev-pill-start { width: 105px; flex: none; }
.rev-track {
  position: relative;
  width: 522px;
  height: 6px;
  background-color: #263038;
  border-radius: 3px;
}
.rev-track i {
  position: absolute;
  left: 296px;
  top: -3px;
  width: 12px;
  height: 12px;
  background-color: #00ff00;
  border-radius: 50%;
}
```
